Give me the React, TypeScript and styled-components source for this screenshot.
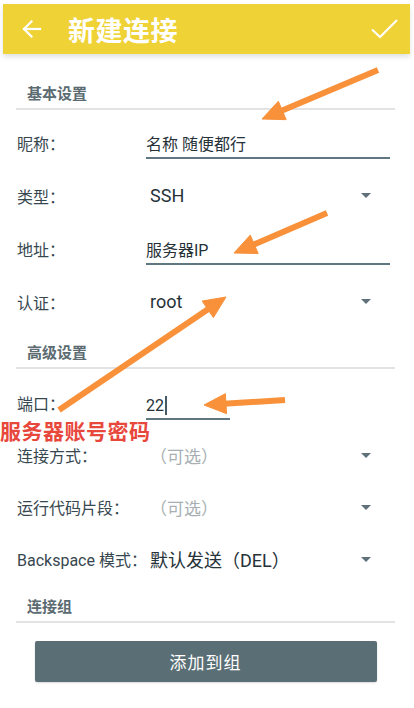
import React from 'react';
import styled, { createGlobalStyle } from 'styled-components';

const GlobalStyle = createGlobalStyle`
  html, body {
    margin: 0;
    padding: 0;
    background: #ffffff;
  }
  body {
    font-family: Roboto, "Noto Sans CJK SC", sans-serif;
  }
`;

const Page = styled.div`
  position: relative;
  width: 414px;
  height: 708px;
  overflow: hidden;
  padding: 4px 4px 0 3px;
  box-sizing: border-box;
  background: #ffffff;
`;

const Toolbar = styled.header`
  height: 50px;
  background: #efd236;
  display: flex;
  align-items: center;
  padding: 0 12px 0 19px;
  position: relative;
  box-shadow: 0 3px 5px rgba(0, 0, 0, 0.12);
`;

const ToolTitle = styled.h1`
  flex: 1;
  margin: 0 0 0 26px;
  font-family: "Noto Sans CJK SC", sans-serif;
  font-weight: 700;
  font-size: 27px;
  color: #ffffff;
  letter-spacing: 0.5px;
  line-height: 1;
`;

const IconBox = styled.span`
  display: flex;
  align-items: center;
  justify-content: center;
`;

const Content = styled.div`
  padding: 0 15px 0 13px;
`;

const SectionTitle = styled.div<{ $top: number }>`
  padding: ${(p) => p.$top}px 0 0 11px;
  font-family: "Noto Sans CJK SC", sans-serif;
  font-weight: 700;
  font-size: 15px;
  line-height: 20px;
  color: #5b6b71;
`;

const Divider = styled.div<{ $after: number }>`
  height: 2px;
  margin: 5px 0 ${(p) => p.$after}px 0;
  background: #e3e3e3;
`;

const Row = styled.div<{ $h: number }>`
  height: ${(p) => p.$h}px;
  display: grid;
  grid-template-columns: 129px 1fr;
  align-items: center;
  padding-left: 1px;
`;

const Label = styled.span`
  font-family: Roboto, "Noto Sans CJK SC", sans-serif;
  font-size: 16px;
  color: #37474f;
  white-space: nowrap;
`;

const Field = styled.div<{ $w?: number }>`
  align-self: center;
  width: ${(p) => (p.$w ? `${p.$w}px` : '244px')};
  border-bottom: 2px solid #5f7780;
  padding: 12px 0 3px 0;
  margin-top: -2px;
  font-family: Roboto, "Noto Sans CJK SC", sans-serif;
  font-size: 16px;
  line-height: 18px;
  color: #263238;
  display: flex;
  align-items: center;
`;

const Caret = styled.span`
  display: inline-block;
  width: 2px;
  height: 19px;
  background: #455a64;
  margin-left: 1px;
`;

const Select = styled.div`
  display: flex;
  align-items: center;
  justify-content: space-between;
  padding: 0 24px 0 4px;
`;

const SelectValue = styled.span<{ $muted?: boolean }>`
  font-family: Roboto, "Noto Sans CJK SC", sans-serif;
  font-size: ${(p) => (p.$muted ? '17px' : '18px')};
  color: ${(p) => (p.$muted ? '#a8afb2' : '#263238')};
  white-space: nowrap;
`;

const Triangle = styled.span`
  width: 0;
  height: 0;
  border-left: 5px solid transparent;
  border-right: 5px solid transparent;
  border-top: 5px solid #5f7078;
`;

const AddButton = styled.button`
  display: block;
  width: 342px;
  height: 41px;
  margin: 18px auto 0;
  border: 0;
  border-radius: 2px;
  background: #5a6e75;
  color: #ffffff;
  font-family: "Noto Sans CJK SC", sans-serif;
  font-size: 17px;
  letter-spacing: 1px;
  box-shadow: 0 1px 2px rgba(0, 0, 0, 0.15);
`;

const Overlay = styled.svg`
  position: absolute;
  left: 0;
  top: 0;
  pointer-events: none;
`;

const Note = styled.div`
  position: absolute;
  left: 0;
  top: 416px;
  font-family: "Noto Sans CJK SC", sans-serif;
  font-weight: 700;
  font-size: 21px;
  line-height: 28px;
  color: #e8473b;
  letter-spacing: 0.5px;
`;

type Arrow = { from: [number, number]; to: [number, number] };

const arrows: Arrow[] = [
  { from: [378, 70], to: [262, 119] },
  { from: [327, 213], to: [234, 253] },
  { from: [59, 410], to: [226, 297] },
  { from: [285, 400], to: [204, 405] },
];

const ArrowShape: React.FC<Arrow> = ({ from, to }) => {
  const dx = to[0] - from[0];
  const dy = to[1] - from[1];
  const len = Math.hypot(dx, dy);
  const ux = dx / len;
  const uy = dy / len;
  const headLen = 22;
  const headW = 10;
  const bx = to[0] - ux * headLen;
  const by = to[1] - uy * headLen;
  const nx = -uy;
  const ny = ux;
  const pts = [
    `${to[0]},${to[1]}`,
    `${bx + nx * headW},${by + ny * headW}`,
    `${bx - nx * headW},${by - ny * headW}`,
  ].join(' ');
  return (
    <g fill="#f8913a" stroke="#f8913a">
      <line x1={from[0]} y1={from[1]} x2={bx + ux * 2} y2={by + uy * 2} strokeWidth={6} />
      <polygon points={pts} strokeWidth={1} strokeLinejoin="round" />
    </g>
  );
};

const App: React.FC = () => {
  return (
    <Page>
      <GlobalStyle />
      <Toolbar>
        <IconBox>
          <svg width="20" height="18" viewBox="0 0 20 18" fill="none" stroke="#fff" strokeWidth="2.2" strokeLinecap="square">
            <path d="M2 9 H18" />
            <path d="M9.5 1.5 L2 9 L9.5 16.5" />
          </svg>
        </IconBox>
        <ToolTitle>新建连接</ToolTitle>
        <IconBox>
          <svg width="27" height="20" viewBox="0 0 27 20" fill="none" stroke="#fff" strokeWidth="2">
            <path d="M1 10.5 L9 18 L26 1" />
          </svg>
        </IconBox>
      </Toolbar>

      <Content>
        <SectionTitle $top={29}>基本设置</SectionTitle>
        <Divider $after={6} />
        <Row $h={53}>
          <Label>昵称：</Label>
          <Field>名称 随便都行</Field>
        </Row>
        <Row $h={53}>
          <Label>类型：</Label>
          <Select>
            <SelectValue>SSH</SelectValue>
            <Triangle />
          </Select>
        </Row>
        <Row $h={53}>
          <Label>地址：</Label>
          <Field>服务器IP</Field>
        </Row>
        <Row $h={53}>
          <Label>认证：</Label>
          <Select>
            <SelectValue>root</SelectValue>
            <Triangle />
          </Select>
        </Row>

        <SectionTitle $top={14}>高级设置</SectionTitle>
        <Divider $after={8} />
        <Row $h={52}>
          <Label>端口：</Label>
          <Field $w={84}>
            22
            <Caret />
          </Field>
        </Row>
        <Row $h={52}>
          <Label>连接方式：</Label>
          <Select>
            <SelectValue $muted>（可选）</SelectValue>
            <Triangle />
          </Select>
        </Row>
        <Row $h={52}>
          <Label>运行代码片段：</Label>
          <Select>
            <SelectValue $muted>（可选）</SelectValue>
            <Triangle />
          </Select>
        </Row>
        <Row $h={52}>
          <Label>Backspace 模式：</Label>
          <Select>
            <SelectValue>默认发送（DEL）</SelectValue>
            <Triangle />
          </Select>
        </Row>

        <SectionTitle $top={11}>连接组</SectionTitle>
        <Divider $after={0} />
        <AddButton>添加到组</AddButton>
      </Content>

      <Overlay width="414" height="708" viewBox="0 0 414 708">
        {arrows.map((a, i) => (
          <ArrowShape key={i} from={a.from} to={a.to} />
        ))}
      </Overlay>
      <Note>服务器账号密码</Note>
    </Page>
  );
};

export default App;
